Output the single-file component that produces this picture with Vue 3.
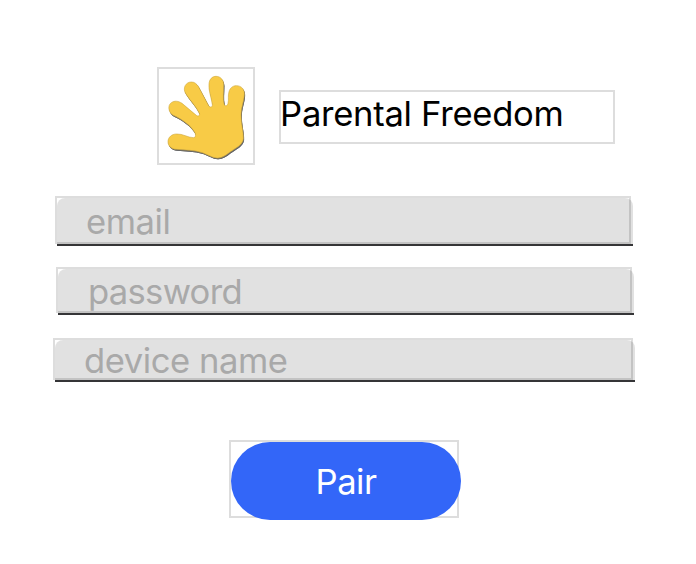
<script setup>
import { reactive } from 'vue'

const fields = reactive([
  { name: 'email', type: 'text', label: 'email', value: '' },
  { name: 'password', type: 'password', label: 'password', value: '' },
  { name: 'device', type: 'text', label: 'device name', value: '' }
])
</script>

<template>
  <main class="screen">
    <header class="brand">
      <div class="frame logo">
        <svg viewBox="27 27 282 282" aria-hidden="true">
          <defs>
            <filter id="hand-shadow" x="-10%" y="-10%" width="120%" height="120%">
              <feGaussianBlur stdDeviation="1.8" />
            </filter>
            <path
              id="hand"
              d="M80 222 C98 221 114 233 130 233 C138 233 138 224 134 217 C122 196 96 178 70 166 C55 158 52 136 64 128 C74 121 86 123 96 130 L139 166 C145 171 151 166 148 160 C138 138 118 120 106 99 C98 84 107 66 124 66 C134 66 140 72 145 79 L176 137 C180 144 188 141 187 134 C184 112 175 91 177 72 C178 57 187 49 198 49 C212 49 221 60 221 74 C221 95 218 115 222 131 C224 140 233 139 234 130 C237 119 233 108 237 95 C240 84 248 77 259 77 C274 77 284 88 283 103 C282 125 273 143 273 165 C273 192 281 216 280 236 C278 256 256 264 240 276 C226 287 214 295 201 294 C187 293 174 284 157 278 C132 270 105 270 80 268 C64 267 54 258 54 245 C54 232 65 222 80 222Z"
            />
          </defs>
          <use href="#hand" class="hand-shadow" filter="url(#hand-shadow)" />
          <use href="#hand" class="wrist-shadow" />
          <use href="#hand" class="hand" />
        </svg>
      </div>
      <h1 class="frame title">Parental Freedom</h1>
    </header>

    <form class="form" @submit.prevent>
      <div v-for="f in fields" :key="f.name" class="frame field" :class="f.name">
        <input v-model="f.value" :type="f.type" :placeholder="f.label" :aria-label="f.label" />
      </div>
      <div class="frame action">
        <button type="submit">Pair</button>
      </div>
    </form>
  </main>
</template>

<style>
body {
  margin: 0;
  background: #fff;
}
</style>

<style scoped>
.screen {
  box-sizing: border-box;
  width: 696px;
  height: 564px;
  padding-top: 67px;
  font-family: Inter, 'Liberation Sans', sans-serif;
}
.frame {
  box-sizing: border-box;
  border: 2px solid #ddd;
}
.brand {
  display: flex;
  gap: 24px;
  height: 98px;
  margin-left: 157px;
}
.logo {
  width: 98px;
  height: 98px;
}
.logo svg {
  display: block;
  width: 94px;
  height: 94px;
}
.hand {
  fill: #f8cb46;
  stroke: #cfa83c;
  stroke-width: 1.8;
}
.hand-shadow {
  fill: #5a5a5a;
  transform: translate(2px, 4px);
}
.wrist-shadow {
  fill: #666;
  transform: translate(2.5px, 4px);
}
.title {
  width: 336px;
  height: 54px;
  margin: 23px 0 0;
  font-size: 34.6px;
  font-weight: 400;
  line-height: 42px;
  letter-spacing: -0.28px;
  text-indent: -0.9px;
  white-space: nowrap;
  color: #000;
}
.form {
  display: flex;
  flex-direction: column;
  margin-top: 31px;
}
.email {
  width: 576px;
  height: 48px;
  margin-left: 55px;
}
.password {
  width: 576px;
  height: 46px;
  margin: 23px 0 0 56px;
}
.device {
  width: 580px;
  height: 42px;
  margin: 25px 0 0 53px;
}
/* Inputs keep the outer size of their frame, so they run over its lower right edge. */
.field input {
  display: block;
  box-sizing: border-box;
  width: calc(100% + 4px);
  height: calc(100% + 4px);
  padding: 0 0 0 29px;
  border: 0;
  border-bottom: 2px solid #353537;
  outline: 0;
  background: rgba(0, 0, 0, 0.118);
  clip-path: inset(0 round 8px 8px 0 0);
  font: 400 34.6px Inter, sans-serif;
  letter-spacing: -0.45px;
  color: #333;
}
.password input {
  padding-left: 30px;
  letter-spacing: -0.7px;
}
.field input::placeholder {
  color: #a9a9a9;
  opacity: 1;
}
.action {
  width: 230px;
  height: 78px;
  margin: 60px 0 0 229px;
}
.action button {
  display: block;
  width: 230px;
  height: 78px;
  padding: 0;
  border: 0;
  border-radius: 39px;
  background: #3366f8;
  font: 400 34.6px Inter, sans-serif;
  letter-spacing: -0.5px;
  color: #fff;
}
</style>
